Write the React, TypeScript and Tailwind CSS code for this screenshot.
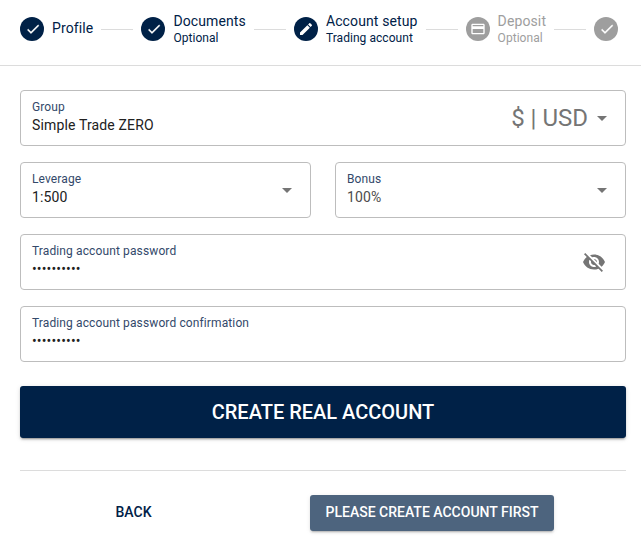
import type { ReactNode } from "react";

const ICONS = {
  check: "M9 16.17L4.83 12l-1.42 1.41L9 19 21 7l-1.41-1.41z",
  edit: "M3 17.25V21h3.75L17.81 9.94l-3.75-3.75L3 17.25zM20.71 7.04a.996.996 0 0 0 0-1.41l-2.34-2.34a.996.996 0 0 0-1.41 0l-1.83 1.83 3.75 3.75 1.83-1.83z",
  card: "M20 4H4c-1.11 0-2 .89-2 2v12c0 1.11.89 2 2 2h16c1.11 0 2-.89 2-2V6c0-1.11-.89-2-2-2zm0 14H4v-6h16v6zm0-10H4V6h16v2z",
  eyeOff:
    "M12 7c2.76 0 5 2.24 5 5 0 .65-.13 1.26-.36 1.83l2.92 2.92c1.51-1.26 2.7-2.89 3.43-4.75-1.73-4.39-6-7.5-11-7.5-1.4 0-2.74.25-3.98.7l2.16 2.16C10.74 7.13 11.35 7 12 7zM2 4.27l2.28 2.28.46.46A11.804 11.804 0 0 0 1 12c1.73 4.39 6 7.5 11 7.5 1.55 0 3.03-.3 4.38-.84l.42.42L19.73 22 21 20.73 3.27 3 2 4.27zM7.53 9.8l1.55 1.55c-.05.21-.08.43-.08.65 0 1.66 1.34 3 3 3 .22 0 .44-.03.65-.08l1.55 1.55c-.67.33-1.41.53-2.2.53-2.76 0-5-2.24-5-5 0-.79.2-1.53.53-2.2zm4.31-.78l3.15 3.15.02-.16c0-1.66-1.34-3-3-3l-.17.01z",
};

type IconName = keyof typeof ICONS;

function Icon({ name, className }: { name: IconName; className: string }) {
  return (
    <svg viewBox="0 0 24 24" fill="currentColor" className={className} aria-hidden>
      <path d={ICONS[name]} />
    </svg>
  );
}

interface Step {
  icon: IconName;
  label?: string;
  hint?: string;
  disabled?: boolean;
}

const STEPS: Step[] = [
  { icon: "check", label: "Profile" },
  { icon: "check", label: "Documents", hint: "Optional" },
  { icon: "edit", label: "Account setup", hint: "Trading account" },
  { icon: "card", label: "Deposit", hint: "Optional", disabled: true },
  { icon: "check", disabled: true },
];

function Stepper() {
  return (
    <div className="flex h-[66px] items-center gap-2 border-b border-[#dcdcdc] pb-[7px] pl-5">
      {STEPS.map((step, i) => (
        <div key={i} className="flex shrink-0 items-center gap-2">
          {i > 0 && <div className="h-px w-8 bg-[#dcdcdc]" />}
          <div
            className={`flex size-6 items-center justify-center rounded-full text-white ${step.disabled ? "bg-[#9e9e9e]" : "bg-[#002147]"}`}
          >
            <Icon
              name={step.icon}
              className={step.icon === "check" ? "ml-px size-4 stroke-current stroke-[0.4]" : "size-4"}
            />
          </div>
          {step.label && (
            <div className={`${step.hint ? "" : "pb-px"} ${step.disabled ? "text-[#9e9e9e]" : "text-[#002147]"}`}>
              <div className="text-sm leading-[17px] tracking-[0.12px]">{step.label}</div>
              {step.hint && <div className="text-xs leading-4 tracking-[0.05px]">{step.hint}</div>}
            </div>
          )}
        </div>
      ))}
    </div>
  );
}

function Caret() {
  return (
    <svg width="10" height="5" viewBox="0 0 10 5" className="mr-[7px] shrink-0 fill-[#757575]" aria-hidden>
      <path d="M0 0l5 5 5-5z" />
    </svg>
  );
}

interface FieldProps {
  label: string;
  value: string;
  valueClass?: string;
  children?: ReactNode;
}

function Field({ label, value, valueClass = "text-[#212121]", children }: FieldProps) {
  return (
    <div className="flex h-14 items-center rounded border border-[#bdbdbd] px-[11px]">
      <div className="mr-auto pb-0.5">
        <div className="text-xs leading-4 tracking-[0.12px] text-[#33496a]">{label}</div>
        <div className={`h-5 text-sm leading-5 tracking-[0.15px] ${valueClass}`}>{value}</div>
      </div>
      {children}
    </div>
  );
}

export default function App() {
  return (
    <div className="h-[543px] w-[641px] overflow-hidden bg-white font-[Roboto,sans-serif]">
      <Stepper />

      <form className="flex flex-col gap-4 pt-6 pr-[15px] pl-5">
        <Field label="Group" value="Simple Trade ZERO">
          <span className="mr-[9px] text-2xl text-[#757575]">$ | USD</span>
          <Caret />
        </Field>
        <div className="grid grid-cols-2 gap-6">
          <Field label="Leverage" value="1:500">
            <Caret />
          </Field>
          <Field label="Bonus" value="100%" valueClass="text-[#4d4d4d]">
            <Caret />
          </Field>
        </div>
        <Field label="Trading account password" value="••••••••••">
          <Icon name="eyeOff" className="mr-2 size-6 text-[#757575]" />
        </Field>
        <Field label="Trading account password confirmation" value="••••••••••" />

        <button
          type="button"
          className="mt-2 h-[52px] rounded-[3px] bg-[#002147] text-xl font-medium text-white shadow-[0_3px_1px_-2px_rgba(0,0,0,.2),0_2px_2px_0_rgba(0,0,0,.14),0_1px_5px_0_rgba(0,0,0,.12)]"
        >
          CREATE REAL ACCOUNT
        </button>
      </form>

      <div className="mt-8 mr-[15px] ml-5 flex border-t border-[#dcdcdc] pt-6">
        <button type="button" className="ml-[79.5px] h-9 px-4 pb-0.5 text-sm font-medium text-[#002147]">
          BACK
        </button>
        <button
          type="button"
          className="ml-auto mr-[72px] h-9 w-[244px] rounded-[3px] bg-[#4d647e] pb-0.5 text-sm font-medium text-white shadow-[0_3px_1px_-2px_rgba(0,0,0,.14),0_2px_2px_0_rgba(0,0,0,.1),0_1px_5px_0_rgba(0,0,0,.08)]"
        >
          PLEASE CREATE ACCOUNT FIRST
        </button>
      </div>
    </div>
  );
}
